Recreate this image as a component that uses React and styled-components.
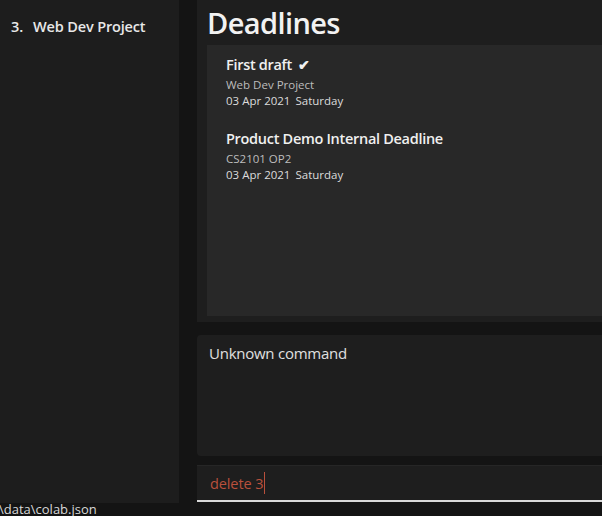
import React from 'react';
import styled, {createGlobalStyle} from 'styled-components';

const GlobalStyle = createGlobalStyle`
  html, body {
    margin: 0;
    padding: 0;
    background: #141414;
    overflow: hidden;
  }
  body {
    font-family: "Open Sans", "Noto Sans", sans-serif;
    color: #e6e6e6;
  }
`

const deadlines = [
  {title: 'First draft', done: true, project: 'Web Dev Project', date: '03 Apr 2021', day: 'Saturday'},
  {title: 'Product Demo Internal Deadline', done: false, project: 'CS2101 OP2', date: '03 Apr 2021', day: 'Saturday'},
];

export default function App() {
  return (
    <Window>
      <GlobalStyle />
      <Body>
        <Sidebar>
          <ProjectRow>
            <Index>3.</Index>
            <span>Web Dev Project</span>
          </ProjectRow>
        </Sidebar>
        <Main>
          <TopPanel>
            <Heading>Deadlines</Heading>
            <List>
              {deadlines.map(d => (
                <Item key={d.title}>
                  <ItemTitle>
                    {d.title}
                    {d.done && <Tick>✔</Tick>}
                  </ItemTitle>
                  <ItemProject>{d.project}</ItemProject>
                  <ItemDate>{d.date}<Day>{d.day}</Day></ItemDate>
                </Item>
              ))}
            </List>
          </TopPanel>
          <ResultBox>Unknown command</ResultBox>
          <CommandBox>
            <CommandText>delete 3</CommandText>
            <Caret />
          </CommandBox>
        </Main>
      </Body>
      <StatusBar>\data\colab.json</StatusBar>
    </Window>
  )
}

const Window = styled.div`
  width: 602px;
  height: 516px;
  overflow: hidden;
  display: flex;
  flex-direction: column;
  background: #141414;
`

const Body = styled.div`
  display: grid;
  grid-template-columns: 179px 1fr;
  column-gap: 18px;
  height: 503px;
  flex-shrink: 0;
`

const Sidebar = styled.div`
  background: #1d1d1d;
  padding: 17px 0 0 11px;
`

const ProjectRow = styled.div`
  display: flex;
  font-size: 14.5px;
  font-weight: 600;
  letter-spacing: -0.15px;
  color: #e8e8e8;
  line-height: 20px;
`

const Index = styled.span`
  width: 22px;
`

const Main = styled.div`
  display: flex;
  flex-direction: column;
  min-width: 0;
`

const TopPanel = styled.div`
  height: 322px;
  background: #1e1e1e;
  padding: 0 0 6px 10px;
  box-sizing: border-box;
  display: flex;
  flex-direction: column;
`

const Heading = styled.h1`
  margin: 0;
  height: 45px;
  font-size: 29px;
  font-weight: 600;
  line-height: 45px;
  color: #f2f2f2;
  letter-spacing: -0.6px;
`

const List = styled.div`
  flex: 1;
  background: #282828;
  padding: 8px 0 0 19px;
`

const Item = styled.div`
  height: 74px;
`

const ItemTitle = styled.div`
  font-size: 14.5px;
  font-weight: 600;
  line-height: 24px;
  letter-spacing: -0.3px;
  color: #f0f0f0;
`

const Tick = styled.span`
  margin-left: 6px;
  font-size: 14px;
`

const ItemProject = styled.div`
  font-size: 11.5px;
  line-height: 16px;
  color: #bdbdbd;
`

const ItemDate = styled.div`
  font-size: 11.5px;
  line-height: 16px;
  color: #dcdcdc;
`

const Day = styled.span`
  margin-left: 5px;
`

const ResultBox = styled.div`
  margin-top: 13px;
  height: 121px;
  background: #1e1e1e;
  border-radius: 4px 0 0 4px;
  padding: 8px 0 0 12px;
  box-sizing: border-box;
  font-size: 15px;
  letter-spacing: -0.25px;
  color: #e0e0e0;
`

const CommandBox = styled.div`
  margin-top: 9px;
  height: 37px;
  background: #1e1e1e;
  border-top: 1px solid #262626;
  border-bottom: 2px solid #d8d8d8;
  box-sizing: border-box;
  display: flex;
  align-items: center;
  padding-left: 13px;
`

const CommandText = styled.span`
  font-size: 14.5px;
  letter-spacing: -0.1px;
  color: #b9503c;
`

const Caret = styled.span`
  width: 1px;
  height: 22px;
  background: #b9503c;
  margin-left: 1px;
`

const StatusBar = styled.div`
  margin-left: -1px;
  font-size: 13px;
  line-height: 13px;
  color: #d8d8d8;
  white-space: nowrap;
`
